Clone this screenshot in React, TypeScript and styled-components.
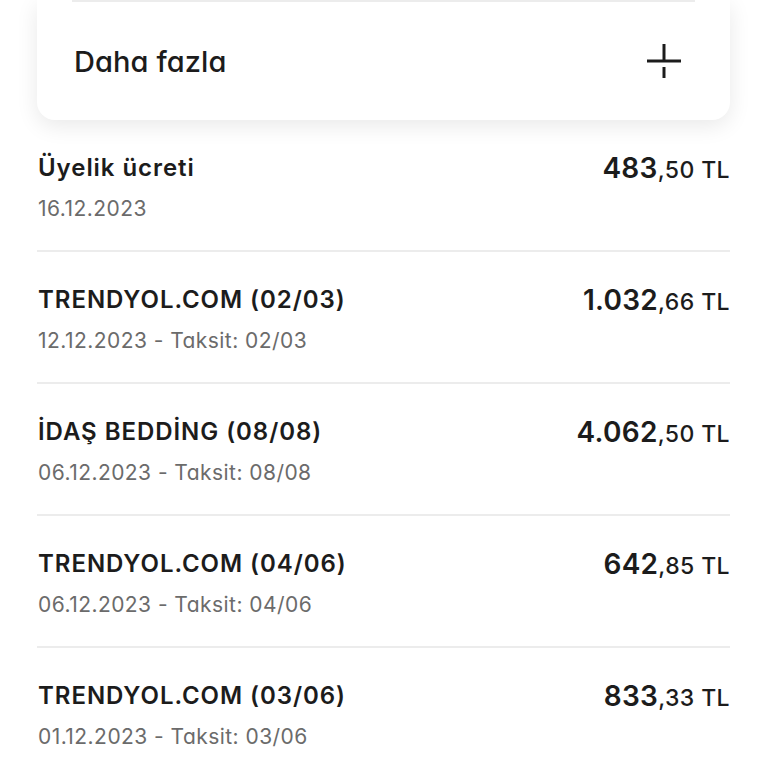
import React from "react";
import styled, { createGlobalStyle } from "styled-components";

const Global = createGlobalStyle`
  html, body { margin: 0; padding: 0; background: #ffffff; }
  body {
    font-family: "Inter", "Noto Sans", sans-serif;
    -webkit-font-smoothing: antialiased;
    font-feature-settings: "cv11" 1;
  }
  * { box-sizing: border-box; }
`;

const Page = styled.div`
  width: 768px;
  height: 768px;
  overflow: hidden;
  padding: 0 38px 0 37px;
  background: #ffffff;
`;

const Card = styled.div`
  background: #ffffff;
  border-radius: 0 0 18px 18px;
  box-shadow: 0 6px 22px rgba(0, 0, 0, 0.09);
  padding: 0 35px;
`;

const CardDivider = styled.div`
  height: 2px;
  background: #ececec;
`;

const MoreRow = styled.div`
  height: 118px;
  display: flex;
  align-items: center;
  justify-content: space-between;
  padding-right: 14px;
`;

const MoreLabel = styled.span`
  font-size: 29px;
  font-weight: 500;
  color: #1c1c1c;
  letter-spacing: 0.1px;
  padding-left: 2px;
`;

const PlusIcon = () => (
  <svg width="34" height="34" viewBox="0 0 34 34" aria-hidden>
    <line x1="0" y1="17" x2="34" y2="17" stroke="#1c1c1c" strokeWidth="3" />
    <line x1="17" y1="0" x2="17" y2="16" stroke="#1c1c1c" strokeWidth="3" />
    <line x1="17" y1="23" x2="17" y2="34" stroke="#1c1c1c" strokeWidth="3" />
  </svg>
);

const List = styled.div`
  display: flex;
  flex-direction: column;
`;

const Row = styled.div`
  display: flex;
  justify-content: space-between;
  align-items: flex-start;
  padding: 34px 0 29px 1px;
  border-bottom: 2px solid #ececec;
`;

const Info = styled.div`
  display: flex;
  flex-direction: column;
  gap: 15px;
`;

const Title = styled.div`
  font-size: 24px;
  line-height: 28px;
  font-weight: 600;
  color: #1c1c1c;
  letter-spacing: 0.95px;
`;

const Sub = styled.div`
  font-size: 21px;
  line-height: 24px;
  font-weight: 400;
  color: #6b6b6b;
  letter-spacing: 0.45px;
`;

const Amount = styled.div`
  display: flex;
  align-items: baseline;
  height: 28px;
  line-height: 28px;
  color: #1c1c1c;
`;

const Whole = styled.span`
  font-size: 28px;
  font-weight: 600;
  letter-spacing: 0.3px;
`;

const Fraction = styled.span`
  font-size: 23px;
  font-weight: 500;
  letter-spacing: 0.4px;
`;

type Item = { title: string; sub: string; whole: string; frac: string };

const items: Item[] = [
  { title: "Üyelik ücreti", sub: "16.12.2023", whole: "483", frac: ",50 TL" },
  { title: "TRENDYOL.COM (02/03)", sub: "12.12.2023 - Taksit: 02/03", whole: "1.032", frac: ",66 TL" },
  { title: "İDAŞ BEDDİNG (08/08)", sub: "06.12.2023 - Taksit: 08/08", whole: "4.062", frac: ",50 TL" },
  { title: "TRENDYOL.COM (04/06)", sub: "06.12.2023 - Taksit: 04/06", whole: "642", frac: ",85 TL" },
  { title: "TRENDYOL.COM (03/06)", sub: "01.12.2023 - Taksit: 03/06", whole: "833", frac: ",33 TL" },
];

export default function App() {
  return (
    <Page>
      <Global />
      <Card>
        <CardDivider />
        <MoreRow>
          <MoreLabel>Daha fazla</MoreLabel>
          <PlusIcon />
        </MoreRow>
      </Card>
      <List>
        {items.map((it, i) => (
          <Row key={i}>
            <Info>
              <Title>{it.title}</Title>
              <Sub>{it.sub}</Sub>
            </Info>
            <Amount>
              <Whole>{it.whole}</Whole>
              <Fraction>{it.frac}</Fraction>
            </Amount>
          </Row>
        ))}
      </List>
    </Page>
  );
}
